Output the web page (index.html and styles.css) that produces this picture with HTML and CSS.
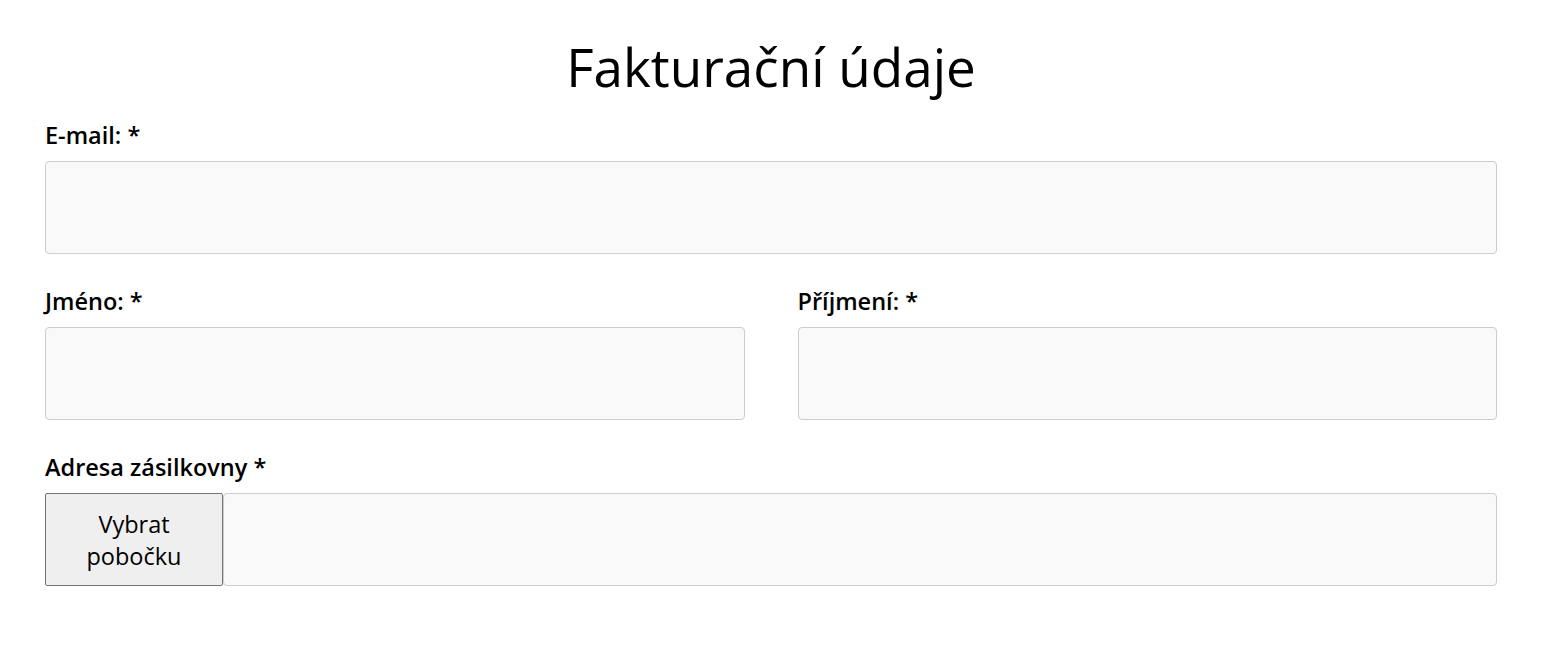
FILE: index.html
```html
<!DOCTYPE html>
<html lang="cs">
<head>
<meta charset="utf-8">
<title>Fakturační údaje</title>
<link rel="stylesheet" href="styles.css">
</head>
<body>
<main class="page">
  <h1 class="title">Fakturační údaje</h1>
  <form class="form">
    <div class="field">
      <label class="label" for="email">E-mail: *</label>
      <input class="input" id="email" type="email">
    </div>
    <div class="row">
      <div class="field">
        <label class="label" for="jmeno">Jméno: *</label>
        <input class="input" id="jmeno" type="text">
      </div>
      <div class="field">
        <label class="label" for="prijmeni">Příjmení: *</label>
        <input class="input" id="prijmeni" type="text">
      </div>
    </div>
    <div class="field">
      <label class="label" for="adresa">Adresa zásilkovny *</label>
      <div class="group">
        <button class="btn" type="button">Vybrat pobočku</button>
        <input class="input input-grow" id="adresa" type="text">
      </div>
    </div>
  </form>
</main>
</body>
</html>
```
FILE: styles.css
```css
html, body {
  margin: 0;
  padding: 0;
  background: #ffffff;
}
body {
  font-family: "Open Sans", "Liberation Sans", sans-serif;
  color: #000;
}
.page {
  padding: 33px 55px 0 45px;
}
.title {
  margin: 0 0 17px;
  font-size: 53px;
  font-weight: 400;
  line-height: 1.3;
  text-align: center;
}
.form {
  display: flex;
  flex-direction: column;
  gap: 31px;
}
.field {
  display: flex;
  flex-direction: column;
}
.label {
  font-size: 23.5px;
  font-weight: 600;
  line-height: 32px;
  margin-bottom: 10px;
}
.row {
  display: grid;
  grid-template-columns: 1fr 1fr;
  column-gap: 53px;
}
.input {
  box-sizing: border-box;
  height: 93px;
  width: 100%;
  margin: 0;
  background: #f9f9f9;
  border: 1px solid #cccccc;
  border-radius: 4px;
  font: inherit;
  font-size: 20px;
  padding: 0 12px;
}
.group {
  display: flex;
}
.btn {
  box-sizing: border-box;
  flex: 0 0 178px;
  height: 93px;
  margin: 0;
  background: #efefef;
  border: 1px solid #767676;
  border-radius: 2px;
  font-family: "Open Sans", "Liberation Sans", sans-serif;
  font-size: 23.5px;
  line-height: 32px;
  color: #000;
  padding: 2px 20px 0;
}
.input-grow {
  flex: 1 1 auto;
  width: auto;
}
```
